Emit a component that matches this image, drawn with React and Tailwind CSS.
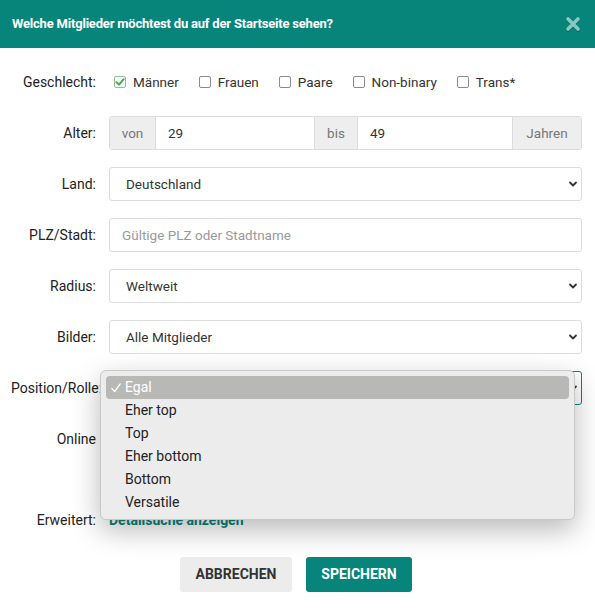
import { useState } from 'react'

const teal = 'bg-[#08857b]'

const Chevron = () => (
  <svg width="10" height="10" viewBox="0 0 10 10" className="shrink-0">
    <path d="M2 3.5 L5 6.5 L8 3.5" fill="none" stroke="#333" strokeWidth="1.8" strokeLinecap="round" strokeLinejoin="round" />
  </svg>
)

const Checkbox = ({ checked, label }) => (
  <label className="flex items-center gap-[7px]">
    <span className={`w-[12px] h-[12px] rounded-[2px] border flex items-center justify-center bg-white ${checked ? 'border-[#8fbf8f]' : 'border-[#8a8a8a]'}`}>
      {checked && (
        <svg width="10" height="10" viewBox="0 0 10 10">
          <path d="M1.5 5.2 L4 7.6 L8.7 2.2" fill="none" stroke="#3eb049" strokeWidth="2" strokeLinecap="round" strokeLinejoin="round" />
        </svg>
      )}
    </span>
    <span className="text-[13.5px] text-[#333]">{label}</span>
  </label>
)

const Row = ({ label, children, tall }) => (
  <div className={`flex ${tall ? 'h-[71px] items-start' : 'h-[34px] items-center'}`}>
    <div className={`ml-[11px] w-[85px] shrink-0 text-right whitespace-nowrap text-[14px] text-[#222] ${tall ? 'leading-[34px]' : ''}`}>{label}</div>
    <div className="ml-[13px] w-[473px]">{children}</div>
  </div>
)

const SelectBox = ({ value, focused }) => (
  <div className={`h-[34px] rounded-[3px] border bg-white flex items-center justify-between pl-[16px] pr-[3px] ${focused ? 'border-[#08857b]' : 'border-[#dcdcdc]'}`}>
    <span className="text-[13.5px] text-[#333]">{value}</span>
    <Chevron />
  </div>
)

const options = ['Egal', 'Eher top', 'Top', 'Eher bottom', 'Bottom', 'Versatile']

export default function App() {
  const [selected] = useState('Egal')
  const gender = [
    ['Männer', true],
    ['Frauen', false],
    ['Paare', false],
    ['Non-binary', false],
    ['Trans*', false],
  ]

  return (
    <div className="w-[595px] h-[608px] bg-white relative overflow-hidden font-['Roboto',sans-serif]">
      {/* Header */}
      <div className={`${teal} h-[48px] flex items-center justify-between pl-[12px] pr-[14px]`}>
        <h1 className="text-white font-bold text-[13px] tracking-[-0.2px] font-['Liberation_Sans_Narrow','Roboto',sans-serif]">
          Welche Mitglieder möchtest du auf der Startseite sehen?
        </h1>
        <svg width="16" height="16" viewBox="0 0 16 16" className="drop-shadow-[0_1px_0_rgba(0,0,0,0.25)]">
          <path d="M3 3 L13 13 M13 3 L3 13" stroke="#86c9c2" strokeWidth="3.6" strokeLinecap="round" />
        </svg>
      </div>

      <div className="pt-[17px] flex flex-col gap-[17px]">
        <Row label="Geschlecht:">
          <div className="flex items-center gap-[20px] pl-[5px]">
            {gender.map(([l, c]) => (
              <Checkbox key={l} label={l} checked={c} />
            ))}
          </div>
        </Row>

        <Row label="Alter:">
          <div className="flex h-[34px] rounded-[3px] border border-[#dcdcdc] overflow-hidden text-[13.5px]">
            <span className="w-[46px] bg-[#eeeeee] text-[#777] flex items-center justify-center border-r border-[#dcdcdc]">von</span>
            <span className="w-[158px] flex items-center pl-[12px] text-[#333]">29</span>
            <span className="w-[44px] bg-[#eeeeee] text-[#777] flex items-center justify-center border-x border-[#dcdcdc]">bis</span>
            <span className="flex-1 flex items-center pl-[12px] text-[#333]">49</span>
            <span className="w-[69px] bg-[#eeeeee] text-[#777] flex items-center justify-center border-l border-[#dcdcdc]">Jahren</span>
          </div>
        </Row>

        <Row label="Land:">
          <SelectBox value="Deutschland" />
        </Row>

        <Row label="PLZ/Stadt:">
          <div className="h-[34px] rounded-[3px] border border-[#dcdcdc] flex items-center pl-[12px] text-[13.5px] text-[#999]">
            Gültige PLZ oder Stadtname
          </div>
        </Row>

        <Row label="Radius:">
          <SelectBox value="Weltweit" />
        </Row>

        <Row label="Bilder:">
          <SelectBox value="Alle Mitglieder" />
        </Row>

        <div className="relative">
          <Row label="Position/Rolle:">
            <SelectBox value={selected} focused />
          </Row>

          {/* open dropdown list */}
          <div className="absolute z-10 left-[100px] top-[-1px] w-[475px] rounded-[6px] border border-[#c9c9c9] bg-[#ececec] p-[5px] shadow-[0_10px_28px_rgba(0,0,0,0.28)]">
            {options.map((o) => (
              <div
                key={o}
                className={`h-[23px] flex items-center rounded-[4px] text-[14px] ${o === selected ? 'bg-[#b8b8b6] text-white' : 'text-[#222]'}`}
              >
                <span className="w-[19px] pl-[5px] flex items-center">
                  {o === selected && (
                    <svg width="10" height="10" viewBox="0 0 10 10">
                      <path d="M0.8 5.4 L3.7 8.6 L9.2 0.9" fill="none" stroke="#fff" strokeWidth="1.3" strokeLinecap="round" strokeLinejoin="round" />
                    </svg>
                  )}
                </span>
                <span>{o}</span>
              </div>
            ))}
          </div>
        </div>

        <Row label="Online" tall>
          <div />
        </Row>

        <div className="flex items-center h-[20px]">
          <div className="ml-[11px] w-[85px] text-right text-[14px] text-[#222]">Erweitert:</div>
          <a className="ml-[13px] text-[14px] font-bold text-[#08857b]">Detailsuche anzeigen</a>
        </div>
      </div>

      {/* Buttons */}
      <div className="flex justify-center gap-[14px] mt-[27px] pr-[3px] font-['Liberation_Sans_Narrow','Roboto',sans-serif]">
        <button className="w-[112px] h-[35px] rounded-[3px] bg-[#ececec] text-[#333] font-bold text-[14px]">ABBRECHEN</button>
        <button className={`w-[106px] h-[35px] rounded-[3px] ${teal} text-white font-bold text-[14px]`}>SPEICHERN</button>
      </div>
    </div>
  )
}
